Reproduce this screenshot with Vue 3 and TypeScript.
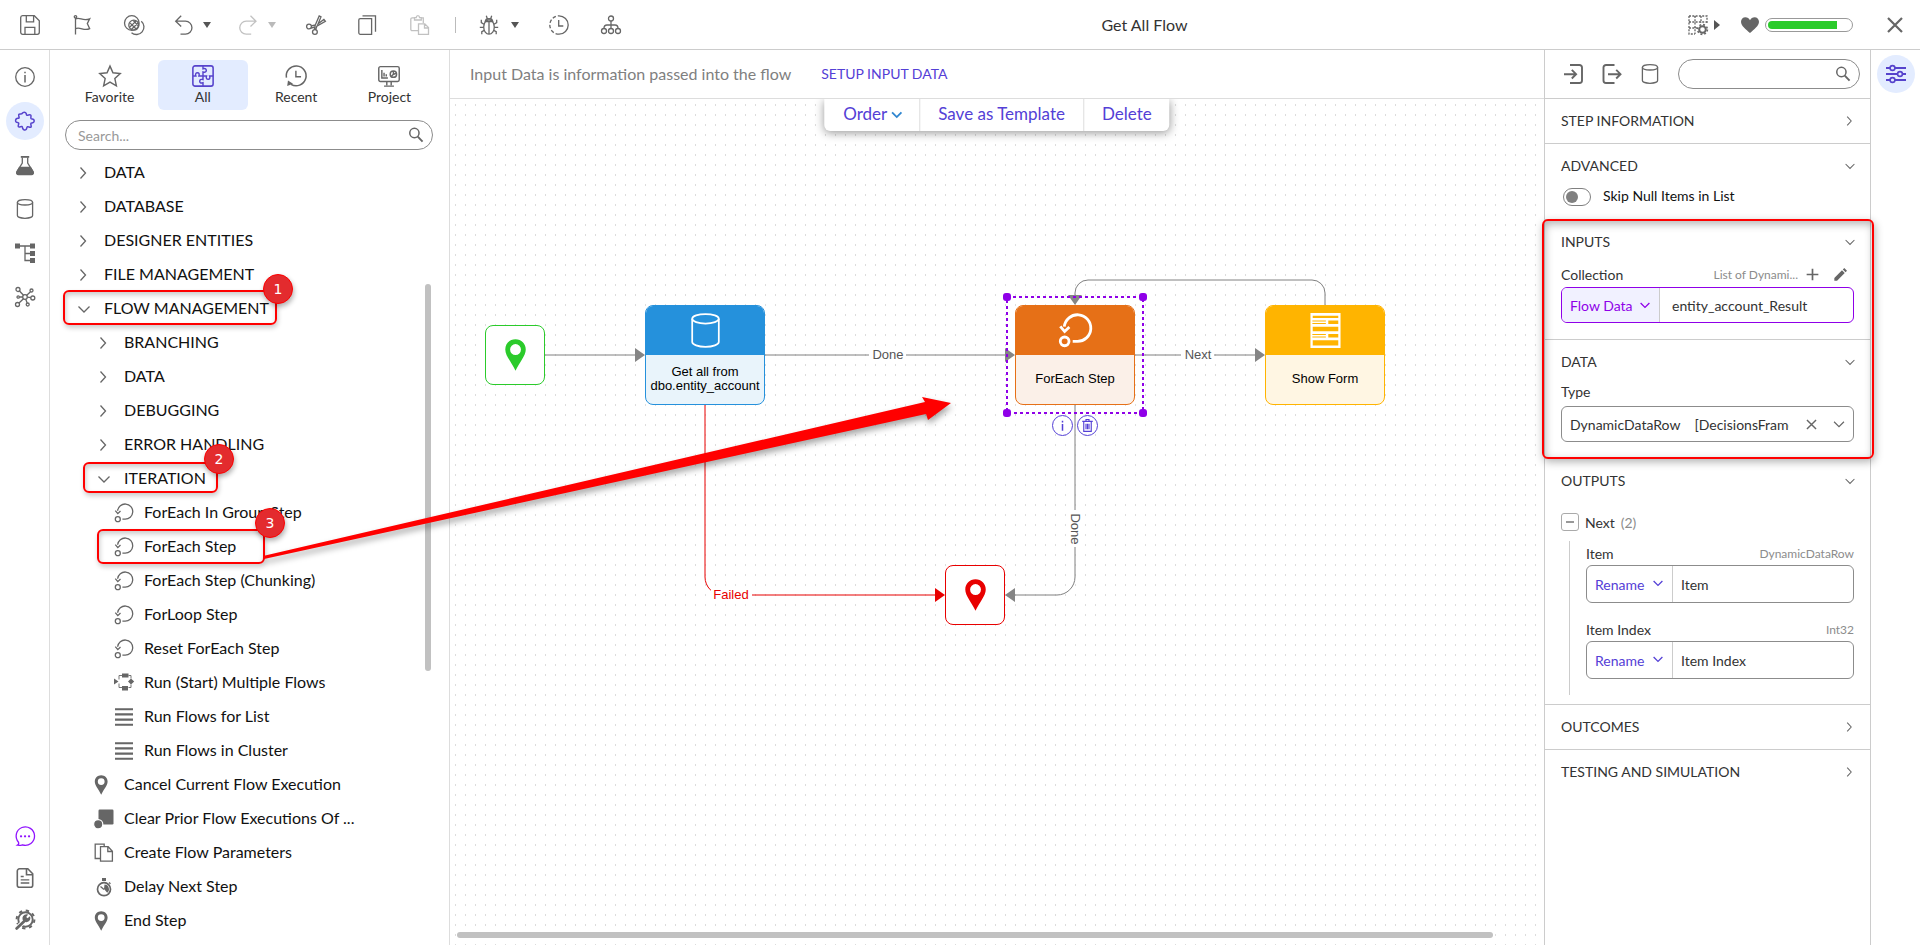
<script setup lang="ts">
import { ref } from 'vue'

type Tool = { icon: string; label: string; split?: boolean; wide?: boolean; off?: boolean; sep?: boolean }
type Row = { text: string; level: number; icon: string; mark?: number }
type FlowNode = { id: string; x: number; y: number; kind: string; icon: string; text?: string[] }

const icons: Record<string, string> = {
  save: '<path d="M2.6.7h11.7l5 5v11.6a2 2 0 0 1-2 2H2.7a2 2 0 0 1-2-2V2.6A2 2 0 0 1 2.6.7z"/><path d="M6.3.9v5.9h7.3V1M5 19.2v-6.9h9.8v6.9"/>',
  flag: '<circle cx="3.5" cy="1.8" r="1.2"/><path d="M3.5 3v16.6M3.5 4c4.500-2.300 7 2.600 14.200-.200L15.300 8.600l2.400 5C12 16.500 8.500 11.500 3.500 13.600"/>',
  mask: '<circle cx="7.800" cy="8" r="7.300"/><circle cx="9.800" cy="10.200" r="5"/><path d="M5.600 12.300l6.700-6.400M7.500 14.300l6.900-6.500M6.200 8.100l6.200 6.200M9.300 5.500l5.200 5.600M17.300 6.200a7.300 7.300 0 1 1-9.800 11.500"/>',
  undo: '<path d="M7.200.8L1.700 6.200l5.500 5.300M2 6.200h9.500a6.400 6.400 0 0 1 0 12.900H6.500"/>',
  redo: '<path d="M11.500.8L17 6.200l-5.500 5.300M16.700 6.200H7.200a6.400 6.400 0 0 0 0 12.900h5"/>',
  cut: '<circle cx="3" cy="11.500" r="2.400"/><circle cx="8.900" cy="17" r="2.400"/><path d="M5.200 10.800l4.100-.900L13.200 1l1.800.900-2.900 6.900 5.800-4.300 1.500 1.800-8.600 5-1.200 3.700M5 13l4-1M8.500 14.500l.800-4.500"/>',
  copy: '<path d="M2.300 3.600h11.300v15.700H2.300a1.500 1.500 0 0 1-1.500-1.500V5.100a1.500 1.500 0 0 1 1.500-1.500zM4.500.8h13v16"/>',
  paste: '<path d="M8.300 15.600H2.100A1.300 1.300 0 0 1 .8 14.300V4.200a1.300 1.300 0 0 1 1.300-1.300h2M11.500 2.900h1.800v5.300"/><path d="M4.500 5V2.600h1.700C6.500 0 9.300 0 9.600 2.600h1.700V5z"/><path d="M8.500 8.800h6.300l3.700 3.800v6.700h-10zM14.500 9v4h4"/>',
  bug: '<ellipse cx="10" cy="12" rx="5.300" ry="7.200"/><path d="M6.300 6.500C6.500 2.800 13.500 2.800 13.700 6.500zM10 7v12M8.300 3.700L7.300.700M11.700 3.700l1-3M4.900 9.200L2.300 7.600V4.800M15.100 9.200l2.600-1.600V4.800M4.600 12.300H.8M15.400 12.300h3.800M5.300 15.300l-2.500 1.300v2.700M14.700 15.300l2.500 1.300v2.700"/>',
  history: '<path d="M10 .8a9.200 9.200 0 0 1 0 18.400"/><path d="M10 19.200A9.200 9.200 0 0 1 10 .8" stroke-dasharray="3.500 2"/><path d="M9.700 5v6h4.600"/>',
  org: '<circle cx="10" cy="3.500" r="2.500"/><circle cx="3" cy="16" r="2.500"/><circle cx="10" cy="16" r="2.500"/><circle cx="17" cy="16" r="2.500"/><path d="M10 6v7.500M3 13.500c0-3 1-3.500 3-3.500h8c2 0 3 .500 3 3.500"/>',
  gridgear: '<path d="M1 1h18v7M1 1v18h6M1 7h18M1 13h8M7 1v18M13 1v7" stroke-dasharray="2 1.300"/><circle cx="14.500" cy="14.500" r="3.300" stroke-width="2"/><circle cx="14.500" cy="14.500" r="4.900" stroke-width="1.600" stroke-dasharray="1.900 1.950"/>',
  heart: '<path fill="currentColor" stroke="none" d="M10 18C6 14.500 1 11 1 6.800 1 4 3 2.200 5.400 2.200c2 0 3.700 1 4.600 3 .900-2 2.600-3 4.600-3C17 2.200 19 4 19 6.800 19 11 14 14.500 10 18z"/>',
  close: '<path d="M3 3l14 14M17 3L3 17" stroke-width="2.200"/>',
  info: '<circle cx="10" cy="10" r="9.300"/><path d="M10 8v7.500M10 4.800v1.500" stroke-width="1.500"/>',
  puzzle: '<path d="M7.200 2.400c.800-1.600 3.400-1.700 4 .100.300 1.100 0 1.700 1 1.800.900.100 2.600-1 3.500-.300.900.800-.300 2.700.300 3.500.600.700 1.600.100 2.500.900 1.200 1.200.700 3-.700 3.400-1 .300-1.700-.100-2 .800-.300.800 1 2.700.200 3.500-.900.800-2.700-.800-3.500-.400-.900.500-.500 1.600-1.200 2.500-1.100 1.400-3.100.900-3.600-.600-.300-1 .100-1.700-.800-2.100-.900-.300-2.600 1-3.500.200-.800-.900.700-2.600.300-3.500-.400-.800-1.500-.400-2.400-1.100-1.300-1.100-.800-3 .600-3.600 1-.300 1.800.100 2.200-.700.300-.800-1-2.600-.200-3.400.9-.900 2.500.500 3.200-1z" stroke-width="1.500"/>',
  flask: '<path d="M5.800 1h8.400v1.800H5.800z" fill="currentColor" stroke="none"/><path d="M7.300 2.500V8l-5.200 8.500c-.900 1.700.100 2.800 1.500 2.800h12.800c1.400 0 2.400-1.100 1.500-2.800L12.700 8V2.500"/><path d="M4.500 12.500h11l2.500 4c.900 1.700-.100 3-1.500 3h-13c-1.400 0-2.400-1.300-1.500-3z" fill="currentColor"/>',
  db: '<ellipse cx="10" cy="3.300" rx="7.600" ry="2.700"/><path d="M2.400 3.300v13.200c0 1.500 3.400 2.800 7.600 2.800s7.600-1.300 7.600-2.800V3.300"/>',
  flowtree: '<path fill="currentColor" stroke="none" d="M0 .5h5v5H0zM15 .5h5v5h-5zM15 8h5v5h-5zM15 15h5v5h-5z"/><path d="M5 3h10M10 3v14.500h5M10 10.500h5"/>',
  hub: '<circle cx="10" cy="10" r="2.300"/><circle cx="3" cy="2.500" r="2"/><circle cx="16.500" cy="3.500" r="1.500"/><circle cx="3.200" cy="10" r="1.200"/><circle cx="17.800" cy="11" r="2"/><circle cx="2.500" cy="17.500" r="2"/><circle cx="12.700" cy="17.500" r="1.500"/><path d="M4.500 4l4 4.300M15.500 4.700l-4 3.800M4.500 10h3.200M12.300 10.200l3.500.500M4 16l4.500-4.300M10.700 12.200l1.500 3.800"/>',
  chat: '<path d="M2.500 19.200c1-.500 1.500-1.500 1-3A9.200 9.200 0 1 1 7.500 18.800c-1.500.500-3 .700-5 .400z"/><path d="M6 10.300h.1M10 10.300h.1M14 10.300h.1" stroke-width="2.200" stroke-linecap="round"/>',
  doc: '<path d="M4.500.8h8.300l4.900 5v11.500a2 2 0 0 1-2 2H4.300a2 2 0 0 1-2-2V3a2.200 2.200 0 0 1 2.200-2.200zM11.500 1v5.800h6" stroke-width="1.600"/><path d="M5.700 8.500h3M5.700 11.800h8.600M5.700 15h8.600"/>',
  gear: '<circle cx="10.500" cy="9.500" r="7.200" stroke-width="1.900"/><circle cx="10.500" cy="9.500" r="8.900" stroke-width="2" stroke-dasharray="3.300 3.690"/><path d="M1 19l8-7.700" stroke="#fff" stroke-width="4.600"/><path d="M1.600 18.400l8.400-8" stroke-width="2.800" stroke-linecap="round"/><path d="M14.900 6.200l-2.300 2.100-1.400-1.400 2-2.300a4 4 0 1 0 1.700 1.600z" fill="currentColor" stroke="none"/>',
  star: '<path d="M10 1l2.700 6.100 6.600.700-4.900 4.500 1.400 6.600L10 15.500l-5.800 3.400 1.400-6.600L.7 7.800l6.600-.700z"/>',
  all: '<rect x=".8" y=".8" width="18.400" height="18.400" rx="2" stroke-width="1.400"/><path d="M10 1v2.500c2.400-.800 3 .400 3 1.500s-.800 2-3 1.300V10M10 10v3.300c-2.200-.700-3 .300-3 1.500s.800 2 3 1.300V19M1 10h2.500c-.800-2.400.400-3 1.500-3s2 .800 1.300 3H10M10 10h3.200c-.700 2.200.300 3 1.500 3s2-.800 1.300-3h3.200" stroke-width="1.300"/>',
  recent: '<path d="M1.300 11.500A9 9 0 1 1 5.500 17.600" stroke-width="1.400"/><path d="M9.900 5.200v5.500h4.700"/><path d="M2 19l.700-5 4.600 3z" fill="currentColor" stroke="none"/>',
  project: '<rect x=".7" y="1.500" width="18.600" height="13.500" rx="1.500"/><path d="M3.500 4.500v7.300H9M5.500 7v3.500M7.500 8.500v2"/><circle cx="14" cy="8.300" r="2.900"/><path d="M14 5.500v3l2.500-1M14 8.500l-2 2M8 15v3.500M12 15v3.500M5.500 19.200h9"/>',
  search: '<circle cx="8" cy="7.500" r="5.800" stroke-width="1.900"/><path d="M12.200 12l6 6.300" stroke-width="2.400"/>',
  right: '<path d="M6.500 4.500l5 5.500-5 5.500"/>',
  down: '<path d="M4.500 7.500l5.500 5.500 5.500-5.500"/>',
  loop: '<circle cx="3.800" cy="16.200" r="2.500"/><path d="M8.400 16.200h2.500a7.600 7.600 0 1 0-7.300-8.400M1.300 7.600l2.500 3 2.700-2.600"/>',
  multi: '<path fill="currentColor" stroke="none" d="M0 5.500l4.500 3-4.500 3zM8 .5h6.500v4H8zM8 13h6v4.500H8zM17 5.500l3.200 3-3.200 3-3-3z"/><path d="M5 6.500v-4h3M5 10.500v4h3M14.500 2.500H17v3M14.500 14.500H17v-3" stroke-width=".9"/>',
  lines: '<path d="M1 2.200h18M1 7.400h18M1 12.600h18M1 17.800h18" stroke-width="2.100"/>',
  pin: '<path fill="currentColor" fill-rule="evenodd" stroke="none" d="M7.200.2C3.500.2.800 3 .8 6.500c0 4 3.700 7.500 6.400 13.300C9.900 14 13.600 10.500 13.600 6.500 13.600 3 10.900.2 7.200.2zm0 3a3.400 3.400 0 1 1 0 6.800 3.400 3.400 0 0 1 0-6.800z"/>',
  clear: '<rect x="4.500" y=".5" width="15" height="15" rx="1.200" fill="currentColor" stroke="none"/><circle cx="4.200" cy="15.300" r="4.600" fill="currentColor" stroke="#fff" stroke-width="1.200"/>',
  params: '<path d="M6 15.500H1.200V1.200h9v2"/><path d="M6.500 3.700h7.700l4.200 4.500v10H6.500zM13.800 4v4.500h4.400"/>',
  timer: '<circle cx="10" cy="12.200" r="6.500" stroke-width="1.700"/><path d="M8 1h4v3H8zM10.500 7.500a4.600 4.600 0 0 1 2.700 8.200L10 12z" fill="currentColor" stroke="none"/><path d="M15 5.500l1.500 1.300M6.500 9.500l3.500 3"/>',
  enter: '<path d="M6 1h9.500A2.500 2.500 0 0 1 18 3.500v13a2.500 2.500 0 0 1-2.500 2.500H6" stroke-width="1.900"/><path d="M0 10.200h11.500M7.800 5.900l4.300 4.300-4.300 4.300" stroke-width="1.900"/>',
  exit: '<path d="M12.500 1H4A2.500 2.500 0 0 0 1.500 3.500v13A2.500 2.500 0 0 0 4 19h8.500" stroke-width="1.900"/><path d="M6 10.200h12M14.200 5.900l4.300 4.300-4.300 4.300" stroke-width="1.900"/>',
  sliders: '<path d="M0 4h4M9 4h11M0 10h11.500M16.500 10H20M0 16h4M9 16h11" stroke-width="1.800"/><circle cx="6.500" cy="4" r="2.400" stroke-width="1.600"/><circle cx="14" cy="10" r="2.400" stroke-width="1.600"/><circle cx="6.500" cy="16" r="2.400" stroke-width="1.600"/>',
  plus: '<path d="M10 1v18M1 10h18" stroke-width="2.600"/>',
  pencil: '<path fill="currentColor" stroke="none" d="M.5 19.500v-4.200L12.300 3.500l4.200 4.200L4.700 19.500zM13.600 2.200L15.800 0 20 4.200l-2.200 2.200z"/>',
  trash: '<path d="M3 4.500h14M5 4.500v13.300h10V4.500M8 4.500V2h4v2.500M8 7.500v7.500M10 7.500v7.500M12 7.500v7.500" stroke-width="1.500"/>',
  form: '<path fill="currentColor" stroke="none" fill-rule="evenodd" d="M1.400 0h17.200v20H1.400zM2.700 1.500v1.300h14.600V1.500zM2.500 4.300v.6h7.700v-.6zM2.500 5.700v.6h7.700v-.6zM11.600 4.300v2h5.700v-2zM2.700 7.900v2.500h14.600V7.900zM2.500 12v.6h7.700V12zM2.500 13.400v.6h7.700v-.6zM11.600 12v2h5.700v-2zM2.700 15.500v3h14.600v-3z"/>'
}

const tools: Tool[] = [
  { icon: 'save', label: 'Save' },
  { icon: 'flag', label: 'Flag' },
  { icon: 'mask', label: 'Compare' },
  { icon: 'undo', label: 'Undo', split: true },
  { icon: 'redo', label: 'Redo', split: true, off: true },
  { icon: 'cut', label: 'Cut' },
  { icon: 'copy', label: 'Copy' },
  { icon: 'paste', label: 'Paste', off: true },
  { icon: 'bug', label: 'Debug', split: true, wide: true, sep: true },
  { icon: 'history', label: 'History' },
  { icon: 'org', label: 'Dependencies' }
]
const railTop = ['info', 'puzzle', 'flask', 'db', 'flowtree', 'hub']
const railBottom = ['chat', 'doc', 'gear']
const tabs = [
  { icon: 'star', text: 'Favorite' },
  { icon: 'all', text: 'All' },
  { icon: 'recent', text: 'Recent' },
  { icon: 'project', text: 'Project' }
]
const activeTab = ref('All')
const rows: Row[] = [
  { text: 'DATA', level: 0, icon: 'right' },
  { text: 'DATABASE', level: 0, icon: 'right' },
  { text: 'DESIGNER ENTITIES', level: 0, icon: 'right' },
  { text: 'FILE MANAGEMENT', level: 0, icon: 'right' },
  { text: 'FLOW MANAGEMENT', level: 0, icon: 'down', mark: 1 },
  { text: 'BRANCHING', level: 1, icon: 'right' },
  { text: 'DATA', level: 1, icon: 'right' },
  { text: 'DEBUGGING', level: 1, icon: 'right' },
  { text: 'ERROR HANDLING', level: 1, icon: 'right' },
  { text: 'ITERATION', level: 1, icon: 'down', mark: 2 },
  { text: 'ForEach In Group Step', level: 2, icon: 'loop' },
  { text: 'ForEach Step', level: 2, icon: 'loop', mark: 3 },
  { text: 'ForEach Step (Chunking)', level: 2, icon: 'loop' },
  { text: 'ForLoop Step', level: 2, icon: 'loop' },
  { text: 'Reset ForEach Step', level: 2, icon: 'loop' },
  { text: 'Run (Start) Multiple Flows', level: 2, icon: 'multi' },
  { text: 'Run Flows for List', level: 2, icon: 'lines' },
  { text: 'Run Flows in Cluster', level: 2, icon: 'lines' },
  { text: 'Cancel Current Flow Execution', level: 1, icon: 'pin' },
  { text: 'Clear Prior Flow Executions Of ...', level: 1, icon: 'clear' },
  { text: 'Create Flow Parameters', level: 1, icon: 'params' },
  { text: 'Delay Next Step', level: 1, icon: 'timer' },
  { text: 'End Step', level: 1, icon: 'pin' }
]
const nodes: FlowNode[] = [
  { id: 'start', x: 35, y: 226, kind: 'start', icon: 'pin' },
  { id: 'getall', x: 195, y: 206, kind: 'blue', icon: 'db', text: ['Get all from', 'dbo.entity_account'] },
  { id: 'foreach', x: 565, y: 206, kind: 'orange', icon: 'loop', text: ['ForEach Step'] },
  { id: 'form', x: 815, y: 206, kind: 'yellow', icon: 'form', text: ['Show Form'] },
  { id: 'end', x: 495, y: 466, kind: 'end', icon: 'pin' }
]
const outputs = [
  { label: 'Item', type: 'DynamicDataRow' },
  { label: 'Item Index', type: 'Int32' }
]
const skipNull = ref(false)
const collection = ref('entity_account_Result')
const dataType = ref('DynamicDataRow\u00a0\u00a0\u00a0\u00a0[DecisionsFramework]')
</script>

<template>
  <div class="app">
    <header class="topbar">
      <div class="tools">
        <template v-for="t in tools" :key="t.icon">
          <span v-if="t.sep" class="sep"></span>
          <button class="tool" :class="{ split: t.split, wide: t.wide, off: t.off }" :aria-label="t.label">
            <svg class="ico" viewBox="0 0 20 20" v-html="icons[t.icon]"></svg>
            <svg v-if="t.split" class="caret" viewBox="0 0 8 6"><path d="M0 0h8L4 6z" /></svg>
          </button>
        </template>
      </div>
      <h1 class="title">Get All Flow</h1>
      <div class="status">
        <button class="tool gridbtn" aria-label="Grid settings">
          <svg class="ico" viewBox="0 0 20 20" v-html="icons.gridgear"></svg>
          <svg class="caret-r" viewBox="0 0 6 10"><path d="M0 0l6 5-6 5z" /></svg>
        </button>
        <svg class="ico" viewBox="0 0 20 20" v-html="icons.heart"></svg>
        <div class="health"><div class="health-fill"></div></div>
        <button class="tool closebtn" aria-label="Close"><svg class="ico" viewBox="0 0 20 20" v-html="icons.close"></svg></button>
      </div>
    </header>

    <div class="body">
      <nav class="rail">
        <button v-for="i in railTop" :key="i" class="rail-btn" :class="{ on: i === 'puzzle' }" :aria-label="i">
          <svg class="ico" viewBox="0 0 20 20" v-html="icons[i]"></svg>
        </button>
        <span class="grow"></span>
        <button v-for="i in railBottom" :key="i" class="rail-btn low" :class="i" :aria-label="i">
          <svg class="ico" viewBox="0 0 20 20" v-html="icons[i]"></svg>
        </button>
      </nav>

      <aside class="toolbox">
        <div class="tabs">
          <button v-for="t in tabs" :key="t.text" class="tab" :class="{ on: activeTab === t.text }" @click="activeTab = t.text">
            <svg class="ico big" viewBox="0 0 20 20" v-html="icons[t.icon]"></svg>
            <span>{{ t.text }}</span>
          </button>
        </div>
        <div class="search wide-search">
          <input type="text" placeholder="Search..." aria-label="Search steps" />
          <svg class="ico small" viewBox="0 0 20 20" v-html="icons.search"></svg>
        </div>
        <div class="tree">
          <button v-for="(r, n) in rows" :key="n" class="row" :class="'lv' + r.level">
            <svg class="ico" viewBox="0 0 20 20" v-html="icons[r.icon]"></svg>
            <span class="row-text">{{ r.text }}</span>
            <span v-if="r.mark" class="mark" :class="'m' + r.mark"><span class="badge">{{ r.mark }}</span></span>
          </button>
          <div class="thumb"></div>
        </div>
      </aside>

      <main class="designer">
        <div class="hint">
          <span>Input Data is information passed into the flow</span>
          <a href="#">SETUP INPUT DATA</a>
        </div>
        <div class="canvas">
          <svg class="wires">
            <defs>
              <pattern id="dots" width="10" height="10" patternUnits="userSpaceOnUse">
                <rect x="5" y="5" width="1" height="2" fill="#dcdcdc" />
              </pattern>
            </defs>
            <rect width="100%" height="100%" fill="url(#dots)" />
            <g class="wire">
              <path d="M95 256H190M315 256H560M685 256H810M875 206V194a13 13 0 0 0-13-13H638a13 13 0 0 0-13 13v6M625 306V478a18 18 0 0 1-18 18H560" />
              <path class="head" d="M185 249l10 7-10 7zM555 249l10 7-10 7zM805 249l10 7-10 7zM618 196h14l-7 10zM565 489l-10 7 10 7z" />
            </g>
            <g class="wire fail">
              <path d="M255 306V478a18 18 0 0 0 18 18H490" />
              <path class="head" d="M485 489l10 7-10 7z" />
            </g>
            <g class="wlabel">
              <rect x="419" y="247" width="37" height="18" />
              <text x="438" y="260">Done</text>
              <rect x="731" y="247" width="33" height="18" />
              <text x="748" y="260">Next</text>
              <rect x="261" y="487" width="41" height="18" />
              <text class="fail" x="281" y="500">Failed</text>
              <rect x="616" y="411" width="18" height="37" />
              <text transform="translate(621 430) rotate(90)">Done</text>
            </g>
          </svg>

          <div v-for="n in nodes" :key="n.id" class="node" :class="[n.kind, { step: n.text }]" :style="{ left: n.x + 'px', top: n.y + 'px' }">
            <div class="node-top"><svg class="ico" viewBox="0 0 20 20" :class="n.icon" v-html="icons[n.icon]"></svg></div>
            <div v-if="n.text" class="node-text"><span v-for="l in n.text" :key="l">{{ l }}</span></div>
          </div>

          <svg class="selection" viewBox="0 0 144 124">
            <rect class="dash" x="4" y="4" width="136" height="116" />
            <rect x="0" y="0" width="8" height="8" rx="3" /><rect x="136" y="0" width="8" height="8" rx="3" />
            <rect x="0" y="116" width="8" height="8" rx="3" /><rect x="136" y="116" width="8" height="8" rx="3" />
          </svg>
          <div class="node-actions">
            <button aria-label="Step info"><svg class="ico" viewBox="0 0 20 20"><path d="M10 8v9M10 3.500v2.500" stroke-width="2" /></svg></button>
            <button aria-label="Delete step"><svg class="ico" viewBox="0 0 20 20" v-html="icons.trash"></svg></button>
          </div>

          <div class="floatbar">
            <button>Order <svg class="ico" viewBox="0 0 20 20" v-html="icons.down"></svg></button>
            <button>Save as Template</button>
            <button>Delete</button>
          </div>
          <div class="hbar"></div>
        </div>
      </main>

      <aside class="props">
        <div class="props-head">
          <button class="tool" aria-label="Inputs"><svg class="ico" viewBox="0 0 20 20" v-html="icons.enter"></svg></button>
          <button class="tool" aria-label="Outputs"><svg class="ico" viewBox="0 0 20 20" v-html="icons.exit"></svg></button>
          <button class="tool" aria-label="Data"><svg class="ico" viewBox="0 0 20 20" v-html="icons.db"></svg></button>
          <div class="search">
            <input type="text" aria-label="Search properties" />
            <svg class="ico small" viewBox="0 0 20 20" v-html="icons.search"></svg>
          </div>
        </div>

        <section class="sec">
          <button class="sec-head"><span>STEP INFORMATION</span><svg class="ico" viewBox="0 0 20 20" v-html="icons.right"></svg></button>
        </section>
        <section class="sec">
          <button class="sec-head"><span>ADVANCED</span><svg class="ico" viewBox="0 0 20 20" v-html="icons.down"></svg></button>
          <label class="switch"><input v-model="skipNull" type="checkbox" /><span>Skip Null Items in List</span></label>
        </section>
        <div class="focus-area">
          <section class="sec pad">
            <button class="sec-head"><span>INPUTS</span><svg class="ico" viewBox="0 0 20 20" v-html="icons.down"></svg></button>
            <div class="field-head tight">
              <label for="collection">Collection</label>
              <span class="type">List of Dynami...</span>
              <button class="mini" aria-label="Add"><svg class="ico" viewBox="0 0 20 20" v-html="icons.plus"></svg></button>
              <button class="mini" aria-label="Edit"><svg class="ico" viewBox="0 0 20 20" v-html="icons.pencil"></svg></button>
            </div>
            <div class="combo purple">
              <div class="pick">
                <select aria-label="Collection source"><option>Flow Data</option></select>
                <svg class="ico" viewBox="0 0 20 20" v-html="icons.down"></svg>
              </div>
              <input id="collection" v-model="collection" type="text" />
            </div>
          </section>
          <section class="sec pad">
            <button class="sec-head"><span>DATA</span><svg class="ico" viewBox="0 0 20 20" v-html="icons.down"></svg></button>
            <div class="field-head plain"><label for="dtype">Type</label></div>
            <div class="combo typebox">
              <input id="dtype" v-model="dataType" type="text" />
              <button class="mini" aria-label="Clear"><svg class="ico" viewBox="0 0 20 20" v-html="icons.close"></svg></button>
              <button class="mini" aria-label="Open list"><svg class="ico open" viewBox="0 0 20 20" v-html="icons.down"></svg></button>
            </div>
          </section>
          <div class="focus-mark"></div>
        </div>
        <section class="sec">
          <button class="sec-head"><span>OUTPUTS</span><svg class="ico" viewBox="0 0 20 20" v-html="icons.down"></svg></button>
          <div class="group-head">
            <button class="fold" aria-label="Collapse Next"></button>
            <span>Next</span><span class="count">(2)</span>
          </div>
          <div class="group">
            <div v-for="(o, n) in outputs" :key="o.label" class="out">
              <div class="field-head"><label :for="'out' + n">{{ o.label }}</label><span class="type">{{ o.type }}</span></div>
              <div class="combo tall">
                <div class="pick">
                  <select :aria-label="o.label + ' action'"><option>Rename</option></select>
                  <svg class="ico" viewBox="0 0 20 20" v-html="icons.down"></svg>
                </div>
                <input :id="'out' + n" type="text" :value="o.label" />
              </div>
            </div>
          </div>
        </section>
        <section class="sec">
          <button class="sec-head"><span>OUTCOMES</span><svg class="ico" viewBox="0 0 20 20" v-html="icons.right"></svg></button>
        </section>
        <section class="sec last">
          <button class="sec-head"><span>TESTING AND SIMULATION</span><svg class="ico" viewBox="0 0 20 20" v-html="icons.right"></svg></button>
        </section>
      </aside>

      <nav class="rail right-rail">
        <button class="rail-btn on" aria-label="Properties"><svg class="ico" viewBox="0 0 20 20" v-html="icons.sliders"></svg></button>
      </nav>
    </div>

    <svg class="pointer" viewBox="0 0 960 600">
      <path d="M263 556L925 402L922 397L951 403L928 420L926 414L264 559z" />
    </svg>
  </div>
</template>

<style>
body {
  margin: 0;
  background: #fff;
}
</style>

<style scoped>
.app {
  position: relative;
  display: flex;
  flex-direction: column;
  height: 100vh;
  overflow: hidden;
  font-family: Lato, "Open Sans", sans-serif;
  font-size: 14px;
  color: #333;
}
.app *,
.app *::before,
.app *::after {
  box-sizing: border-box;
}
button {
  padding: 0;
  border: 0;
  background: none;
  font: inherit;
  color: inherit;
  cursor: pointer;
}
input,
select {
  font: inherit;
  color: inherit;
  min-width: 0;
  padding: 0;
  border: 0;
  outline: 0;
  background: transparent;
}
.ico {
  flex: none;
  width: 20px;
  height: 20px;
  fill: none;
  stroke: currentColor;
  stroke-width: 1.3;
  color: #666;
  overflow: visible;
}
.ico.small {
  width: 16px;
  height: 16px;
}
.ico.big {
  width: 22px;
  height: 22px;
}
.grow {
  flex: 1;
}

/* top bar */
.topbar {
  flex: none;
  display: flex;
  align-items: center;
  height: 50px;
  padding: 0 15px 0 20px;
  border-bottom: 1px solid #ccc;
}
.tools {
  display: flex;
  align-items: center;
  gap: 32px;
}
.tool {
  display: flex;
  align-items: center;
  justify-content: space-between;
  height: 20px;
}
.split {
  width: 37px;
  margin: 0 -2px;
}
.split.wide {
  width: 40px;
}
.off {
  opacity: 0.4;
}
.sep {
  width: 1px;
  height: 16px;
  margin: 0 -7px 0 -7px;
  background: #bbb;
}
.caret {
  width: 8px;
  height: 6px;
  fill: #555;
}
.caret-r {
  width: 6px;
  height: 10px;
  fill: #555;
}
.title {
  flex: 1;
  margin: 0;
  padding-right: 20px;
  text-align: center;
  font-size: 16px;
  line-height: 20px;
  font-weight: 400;
}
.status {
  display: flex;
  align-items: center;
}
.gridbtn {
  width: 32px;
  margin-right: 20px;
}
.health {
  width: 88px;
  height: 14px;
  margin: 0 32px 0 5px;
  padding: 2px;
  border: 1px solid #999;
  border-radius: 7px;
}
.health-fill {
  width: 84%;
  height: 8px;
  background: #2bcb2b;
  border-radius: 4px 0 0 4px;
}

.body {
  flex: 1;
  min-height: 0;
  display: flex;
}

/* rails */
.rail {
  flex: none;
  display: flex;
  flex-direction: column;
  align-items: center;
  gap: 6px;
  width: 50px;
  padding: 8px 0 7px;
  border-right: 1px solid #ddd;
}
.rail-btn {
  flex: none;
  display: flex;
  align-items: center;
  justify-content: center;
  width: 38px;
  height: 38px;
  border-radius: 50%;
}
.rail-btn.low {
  height: 36px;
}
.rail-btn.on {
  background: #e3ecff;
}
.rail-btn.on .ico {
  color: #5643cc;
}
.chat .ico {
  color: #9013fe;
}
.right-rail {
  width: 49px;
  padding-top: 5px;
  border-right: 0;
}

/* toolbox */
.toolbox {
  flex: none;
  display: flex;
  flex-direction: column;
  width: 400px;
  border-right: 1px solid #ddd;
}
.tabs {
  display: flex;
  gap: 4px;
  padding: 10px 15px;
}
.tab {
  flex: 1;
  display: flex;
  flex-direction: column;
  align-items: center;
  height: 50px;
  padding-top: 5px;
  border-radius: 6px;
  line-height: 20px;
}
.tab.on {
  background: #e3ecff;
}
.tab.on .ico {
  color: #5643cc;
}
.search {
  flex: 1;
  display: flex;
  align-items: center;
  min-width: 0;
  height: 30px;
  padding: 0 8px 0 12px;
  border: 1px solid #8c8c8c;
  border-radius: 15px;
}
.search input {
  flex: 1;
  width: 0;
}
.search input::placeholder {
  color: #999;
  opacity: 1;
}
.wide-search {
  flex: none;
  margin: 0 16px 6px 15px;
}
.tree {
  position: relative;
  flex: 1;
  min-height: 0;
  overflow: hidden;
  color: #111;
}
.row {
  position: relative;
  display: flex;
  align-items: center;
  gap: 10px;
  width: 100%;
  height: 34px;
  font-size: 16px;
  text-align: left;
}
.row-text {
  padding-bottom: 3px;
}
.lv0 {
  padding-left: 24px;
}
.lv1 {
  padding-left: 44px;
}
.lv2 {
  padding-left: 64px;
}
.thumb {
  position: absolute;
  top: 128px;
  right: 18px;
  width: 6px;
  height: 49%;
  border-radius: 3px;
  background: #c1c1c1;
}
.mark {
  position: absolute;
  z-index: 2;
  top: -2px;
  left: 13px;
  width: 214px;
  height: 35px;
  border: 2px solid #f00;
  border-radius: 6px;
  box-shadow: 1px 3px 5px rgba(0, 0, 0, 0.2), inset 1px 3px 5px rgba(0, 0, 0, 0.2);
}
.m2 {
  top: 0;
  left: 33px;
  width: 135px;
  height: 31px;
}
.m3 {
  top: -1px;
  left: 47px;
  width: 168px;
}
.badge {
  position: absolute;
  top: -18px;
  right: -18px;
  width: 30px;
  height: 30px;
  border: 1px solid #f00;
  border-radius: 50%;
  background: #e32b2e;
  box-shadow: 1px 3px 5px rgba(0, 0, 0, 0.3);
  color: #fff;
  font-family: "DejaVu Sans", sans-serif;
  font-size: 14px;
  line-height: 28px;
  text-align: center;
}
.m3 .badge {
  top: -23px;
  right: -22px;
}
.m2 .badge {
  top: -20px;
}

/* designer */
.designer {
  flex: 1;
  min-width: 0;
  display: flex;
  flex-direction: column;
}
.hint {
  flex: none;
  display: flex;
  align-items: center;
  gap: 30px;
  height: 49px;
  padding: 0 0 2px 20px;
  border-bottom: 1px solid #ddd;
  color: #808080;
  font-size: 16px;
}
.hint a {
  color: #5440d6;
  font-size: 14px;
  text-decoration: none;
}
.canvas {
  position: relative;
  flex: 1;
  overflow: hidden;
}
.wires {
  position: absolute;
  top: 0;
  left: 0;
  width: 100%;
  height: 100%;
}
.wire path {
  fill: none;
  stroke: #808080;
}
.wire .head {
  fill: #858585;
  stroke: none;
}
.wire.fail path {
  stroke: #e80000;
}
.wire.fail .head {
  fill: #e80000;
  stroke: none;
}
.wlabel {
  font: 13px "Liberation Sans", Arial, sans-serif;
  text-anchor: middle;
  fill: #555;
}
.wlabel rect {
  fill: #fff;
}
.wlabel .fail {
  fill: #e80000;
}
.node {
  position: absolute;
  display: flex;
  flex-direction: column;
  overflow: hidden;
  width: 60px;
  height: 60px;
  border: 1px solid;
  border-radius: 8px;
  background: #fff;
  font: 13px/14px "Liberation Sans", Arial, sans-serif;
}
.node.step {
  width: 120px;
  height: 100px;
}
.node-top {
  flex: 1;
  display: flex;
  align-items: center;
  justify-content: center;
}
.step .node-top {
  flex: none;
  height: 49px;
}
.node-top .ico {
  width: 35px;
  height: 35px;
  color: #fff;
  stroke-width: 1;
}
.node-top .loop {
  stroke-width: 1.6;
}
.node-top .pin {
  width: 32px;
  height: 32px;
  margin-left: 9px;
}
.node-text {
  flex: 1;
  display: flex;
  flex-direction: column;
  align-items: center;
  justify-content: center;
  padding-bottom: 2px;
  color: #000;
}
.start {
  border-color: #2bcb2b;
}
.start .ico {
  color: #2bcb2b;
}
.end {
  border-color: #e80000;
}
.end .ico {
  color: #e80000;
}
.blue {
  border-color: #2591dc;
  background: #e9f4fb;
}
.blue .node-top {
  background: #2591dc;
}
.orange {
  border-color: #e67017;
  background: #fbf0e8;
}
.orange .node-top {
  background: #e67017;
}
.yellow {
  border-color: #ffb400;
  background: #fff6e3;
}
.yellow .node-top {
  background: #ffb400;
}
.selection {
  position: absolute;
  left: 553px;
  top: 194px;
  width: 144px;
  height: 124px;
  fill: #8f00e8;
}
.dash {
  fill: none;
  stroke: #8f00e8;
  stroke-width: 2;
  stroke-dasharray: 3 3;
}
.node-actions {
  position: absolute;
  left: 602px;
  top: 316px;
  display: flex;
  gap: 4px;
}
.node-actions button {
  display: flex;
  align-items: center;
  justify-content: center;
  width: 21px;
  height: 21px;
  border: 1px solid #5440d6;
  border-radius: 50%;
  background: #fff;
}
.node-actions .ico {
  width: 15px;
  height: 15px;
  color: #5440d6;
}
.floatbar {
  position: absolute;
  top: 0;
  left: 50%;
  display: flex;
  height: 32px;
  transform: translateX(-50%);
  border-radius: 0 0 6px 6px;
  background: #fff;
  box-shadow: 0 2px 10px rgba(0, 0, 0, 0.4);
  white-space: nowrap;
}
.floatbar button {
  display: flex;
  align-items: center;
  gap: 1px;
  padding: 0 14px 4px 19px;
  color: #5440d6;
  font-size: 17px;
}
.floatbar button + button {
  border-left: 1px solid #ddd;
  padding: 0 18px 4px;
}
.floatbar .ico {
  width: 17px;
  height: 17px;
  margin-top: 3px;
  color: #2f86d0;
  stroke-width: 2.2;
}
.hbar {
  position: absolute;
  bottom: 7px;
  left: 7px;
  right: 51px;
  height: 6px;
  border-radius: 3px;
  background: #c1c1c1;
}

/* properties */
.props {
  flex: none;
  width: 327px;
  border: solid #ccc;
  border-width: 0 1px;
}
.props-head {
  display: flex;
  align-items: center;
  gap: 18px;
  height: 49px;
  padding: 0 10px 0 19px;
  border-bottom: 1px solid #ccc;
}
.sec {
  padding: 0 16px;
  border-bottom: 1px solid #ccc;
}
.sec.last {
  border-bottom: 0;
}
.sec.pad {
  padding-bottom: 16px;
}
.sec-head {
  display: flex;
  align-items: center;
  justify-content: space-between;
  width: 100%;
  height: 44px;
  text-align: left;
}
.sec-head span,
.switch span {
  padding-bottom: 2px;
}
.sec-head .ico {
  width: 16px;
  height: 16px;
  margin-right: -4px;
}
.switch {
  display: flex;
  align-items: center;
  gap: 12px;
  height: 31px;
  padding: 0 0 14px 2px;
  color: #111;
}
.switch input {
  appearance: none;
  flex: none;
  width: 28px;
  height: 18px;
  margin: 0;
  padding: 2px;
  border: 1px solid #808080;
  border-radius: 9px;
}
.switch input::before {
  content: "";
  display: block;
  width: 12px;
  height: 12px;
  border-radius: 50%;
  background: #808080;
}
.switch input:checked::before {
  margin-left: 10px;
}
.focus-area {
  position: relative;
}
.focus-mark {
  position: absolute;
  inset: -1px -4px 0 -3px;
  border: 2px solid #f00;
  border-radius: 6px;
  box-shadow: 1px 3px 8px rgba(0, 0, 0, 0.3), inset 1px 3px 8px rgba(0, 0, 0, 0.3);
  pointer-events: none;
}
.field-head {
  display: flex;
  align-items: center;
  height: 24px;
}
.field-head label {
  flex: 1;
}
.field-head.tight {
  height: 23px;
  padding-bottom: 2px;
}
.field-head.plain {
  height: 22px;
  padding-bottom: 7px;
}
.type {
  color: #8c8c8c;
  font-size: 12px;
}
.mini {
  display: flex;
  align-items: center;
  justify-content: center;
  width: 28px;
  height: 20px;
}
.mini .ico {
  width: 13px;
  height: 13px;
}
.combo {
  display: flex;
  align-items: stretch;
  height: 36px;
  border: 1px solid #8c8c8c;
  border-radius: 6px;
  overflow: hidden;
}
.combo.tall {
  height: 38px;
}
.combo > input {
  flex: 1;
  padding: 0 8px;
}
.pick {
  position: relative;
  flex: none;
  display: flex;
  width: 86px;
  border-right: 1px solid #ccc;
  color: #5440d6;
}
.pick select {
  appearance: none;
  width: 100%;
  padding-left: 8px;
  cursor: pointer;
}
.pick .ico {
  position: absolute;
  top: 9px;
  right: 6px;
  width: 16px;
  height: 16px;
  color: inherit;
  stroke-width: 1.6;
  pointer-events: none;
}
.purple {
  border-color: #8f00e8;
}
.purple .pick {
  width: 98px;
  background: #f1f1ff;
  color: #8f00e8;
}
.purple > input {
  padding-left: 12px;
}
.typebox {
  align-items: center;
}
.typebox > input {
  padding-right: 0;
  margin-right: 8px;
}
.typebox .ico.open {
  width: 18px;
  height: 18px;
}
.group-head {
  display: flex;
  align-items: center;
  gap: 6px;
  height: 38px;
}
.fold {
  display: flex;
  align-items: center;
  justify-content: center;
  width: 18px;
  height: 18px;
  border: 1px solid #aaa;
  border-radius: 3px;
}
.fold::before {
  content: "";
  width: 8px;
  height: 2px;
  background: #999;
}
.count {
  color: #8c8c8c;
}
.group {
  display: flex;
  flex-direction: column;
  gap: 14px;
  margin: 0 0 9px 8px;
  padding: 0 0 16px 16px;
  border-left: 1px solid #ccc;
}
.pointer {
  position: absolute;
  z-index: 3;
  top: 0;
  left: 0;
  width: 960px;
  height: 600px;
  fill: #f00;
  filter: drop-shadow(1px 4px 3px rgba(0, 0, 0, 0.35));
  pointer-events: none;
}
</style>
